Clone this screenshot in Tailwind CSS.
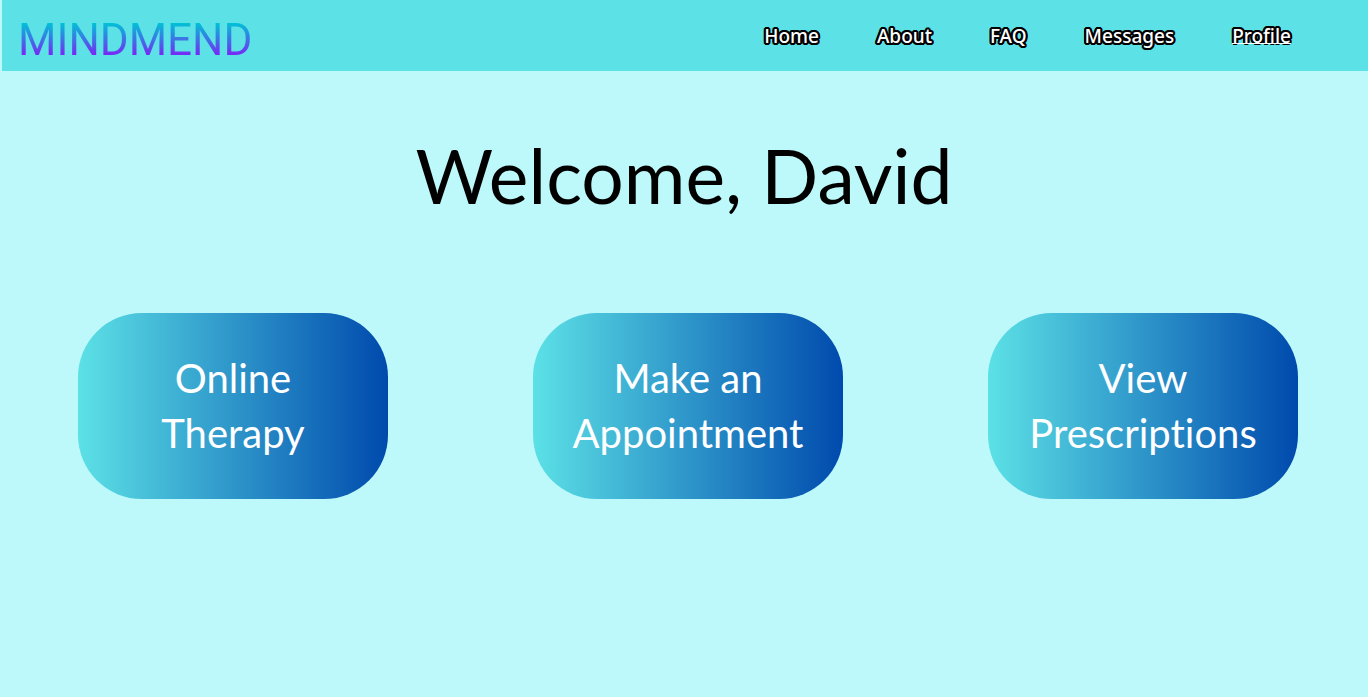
<!DOCTYPE html>
<html lang="en">
<head>
<meta charset="utf-8">
<meta name="viewport" content="width=device-width, initial-scale=1">
<title>MindMend</title>
<script src="https://cdn.jsdelivr.net/npm/@tailwindcss/browser@4"></script>
</head>
<body class="min-h-screen bg-[#bdf9fa] font-['Lato',sans-serif] [font-variant-ligatures:none]">
<header class="ml-0.5 flex h-[71px] items-center justify-between bg-[#5ce1e6] pr-[77px] pl-4">
  <a href="#" class="bg-linear-to-b/srgb from-[#00c2d6] from-30% to-[#7a26f5] to-80% bg-clip-text pt-2 font-['Roboto',sans-serif] text-[44px] leading-[56px] text-transparent">MINDMEND</a>
  <nav class="flex gap-[58px] font-['Noto_Sans',sans-serif] text-[19px] leading-7 font-medium text-white [text-shadow:2px_0_#000,-2px_0_#000,0_2px_#000,0_-2px_#000,2px_1px_#000,-2px_1px_#000,2px_-1px_#000,-2px_-1px_#000,1px_2px_#000,-1px_2px_#000,1px_-2px_#000,-1px_-2px_#000]">
    <a href="#">Home</a>
    <a href="#">About</a>
    <a href="#">FAQ</a>
    <a href="#">Messages</a>
    <a href="#" class="relative after:absolute after:inset-x-0 after:bottom-1.5 after:h-px after:bg-white" aria-current="page">Profile</a>
  </nav>
</header>
<main>
  <h1 class="pt-[59px] text-center text-[75px] leading-[90px] text-black">Welcome, David</h1>
  <div class="mt-[93px] flex justify-between pr-[70px] pl-[78px] text-[40px] leading-[55px] text-white">
    <button type="button" class="h-[186px] w-[310px] rounded-[64px] bg-linear-to-r/srgb from-[#5ce1e6] to-[#004aad]">Online<br>Therapy</button>
    <button type="button" class="h-[186px] w-[310px] rounded-[64px] bg-linear-to-r/srgb from-[#5ce1e6] to-[#004aad]">Make an<br>Appointment</button>
    <button type="button" class="h-[186px] w-[310px] rounded-[64px] bg-linear-to-r/srgb from-[#5ce1e6] to-[#004aad]">View<br>Prescriptions</button>
  </div>
</main>
</body>
</html>
